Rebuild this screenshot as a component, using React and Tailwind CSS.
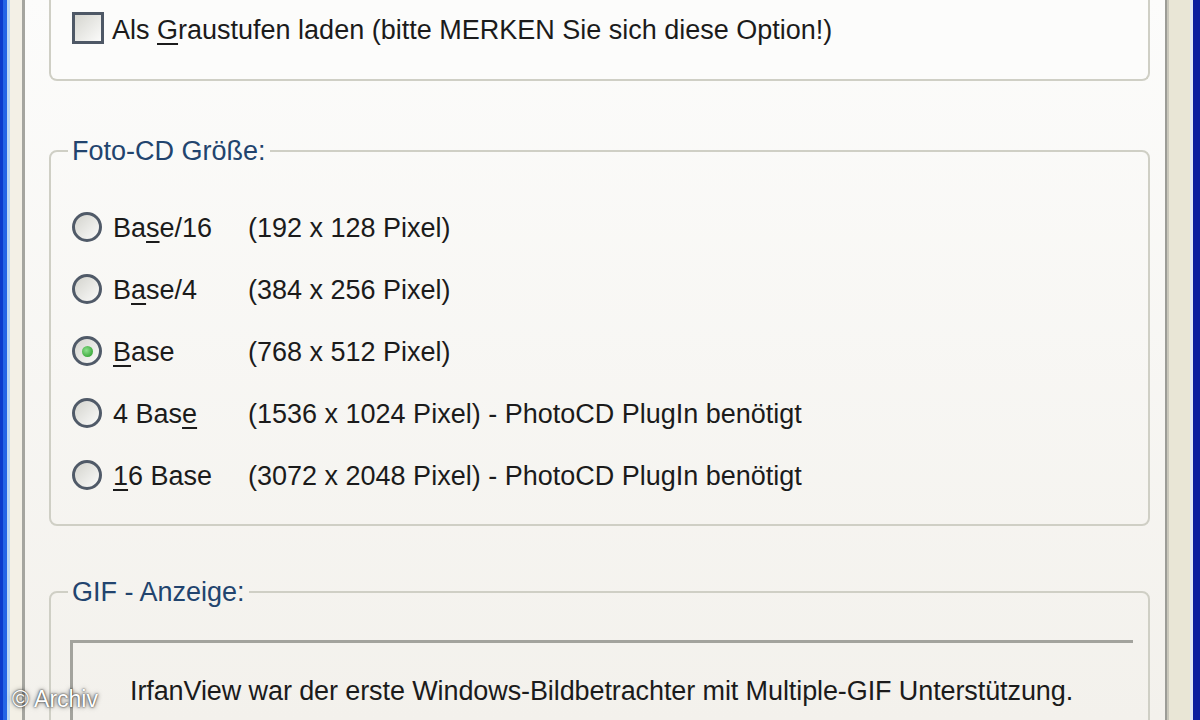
import React from "react";

function Checkbox() {
  return (
    <div className="w-[32px] h-[32px] shrink-0 border-[3px] border-[#4e5866] bg-linear-to-br from-[#d6d6d0] to-[#fbfbfa]" />
  );
}

function Radio({ checked }) {
  return (
    <div className="w-[30px] h-[30px] shrink-0 rounded-full border-[3px] border-[#505a68] bg-linear-to-br from-[#d4d4ce] to-[#fbfbfa] flex items-center justify-center">
      {checked && (
        <div className="w-[11px] h-[11px] rounded-full bg-[radial-gradient(circle_at_40%_40%,#8ee08e,#1e961e)]" />
      )}
    </div>
  );
}

function Mn({ children }) {
  return (
    <span className="underline decoration-[2px] underline-offset-[4px]">{children}</span>
  );
}

const rows = [
  { a: "Ba", m: "s", b: "e/16", size: "(192 x 128 Pixel)" },
  { a: "B", m: "a", b: "se/4", size: "(384 x 256 Pixel)" },
  { a: "", m: "B", b: "ase", size: "(768 x 512 Pixel)", checked: true },
  { a: "4 Bas", m: "e", b: "", size: "(1536 x 1024 Pixel) - PhotoCD PlugIn benötigt" },
  { a: "", m: "1", b: "6 Base", size: "(3072 x 2048 Pixel) - PhotoCD PlugIn benötigt" },
];

export default function App() {
  return (
    <div className="w-[1200px] h-[720px] overflow-hidden flex relative font-['Liberation_Sans',Arial,sans-serif] text-[27px] leading-[32px] text-[#1b1b1b]">
      <div className="w-[3px] bg-[#0c3ccb]" />
      <div className="w-[4px] bg-[#2466e6]" />
      <div className="w-[3px] bg-[#bcd9f2]" />
      <div className="w-[12px] bg-[#f3f0e6]" />
      <div className="w-[3px] bg-[#a5a59f]" />

      <div className="w-[1140px] bg-linear-to-b from-[#fcfcfb] to-[#f3f1ec] flex flex-col pl-[24px] pr-[15px]">
        {/* Group 1 (top cut off) */}
        <div className="border-x-2 border-b-2 border-[#cfcfc5] rounded-b-[8px] bg-[#fcfcfb] pt-[8px] pb-[31px] pl-[21px]">
          <div className="h-[40px] flex items-center">
            <Checkbox />
            <span className="ml-[8px] pt-[3px]">
              Als <Mn>G</Mn>raustufen laden (bitte MERKEN Sie sich diese Option!)
            </span>
          </div>
        </div>

        {/* Group 2 */}
        <fieldset className="mt-[54px] border-2 border-[#cfcfc5] rounded-[8px]">
          <legend className="ml-[17px] px-[4px] text-[#22446e]">Foto-CD Größe:</legend>
          <div className="pt-[29px] pb-[18px] pl-[21px] flex flex-col">
            {rows.map((r, i) => (
              <div key={i} className="h-[62px] flex items-center">
                <Radio checked={r.checked} />
                <div className="ml-[11px] w-[135px] shrink-0 pt-[2px]">
                  {r.a}
                  <Mn>{r.m}</Mn>
                  {r.b}
                </div>
                <div className="pt-[2px]">{r.size}</div>
              </div>
            ))}
          </div>
        </fieldset>

        {/* Group 3 */}
        <fieldset className="mt-[50px] border-2 border-[#cfcfc5] rounded-[8px] h-[260px] shrink-0">
          <legend className="ml-[17px] px-[4px] text-[#22446e]">GIF - Anzeige:</legend>
          <div className="pt-[32px] pl-[19px] pr-[15px]">
            <div className="border-t-[3px] border-l-[3px] border-[#a3a39d] pt-[32px] pl-[57px] h-[200px] tracking-[-0.1px]">
              IrfanView war der erste Windows-Bildbetrachter mit Multiple-GIF Unterstützung.
            </div>
          </div>
        </fieldset>
      </div>

      <div className="w-[2px] bg-[#9c9c96]" />
      <div className="w-[2px] bg-[#c9c7bb]" />
      <div className="w-[21px] bg-[#e9e6d6]" />
      <div className="w-[3px] bg-[#e0e4f2]" />
      <div className="w-[7px] bg-[#0b1ca0]" />

      <div className="absolute left-[12px] bottom-[8px] text-[23px] leading-[26px] text-white [text-shadow:0_0_2px_rgba(0,0,0,0.9),0_0_5px_rgba(0,0,0,0.6)]">
        © Archiv
      </div>
    </div>
  );
}
